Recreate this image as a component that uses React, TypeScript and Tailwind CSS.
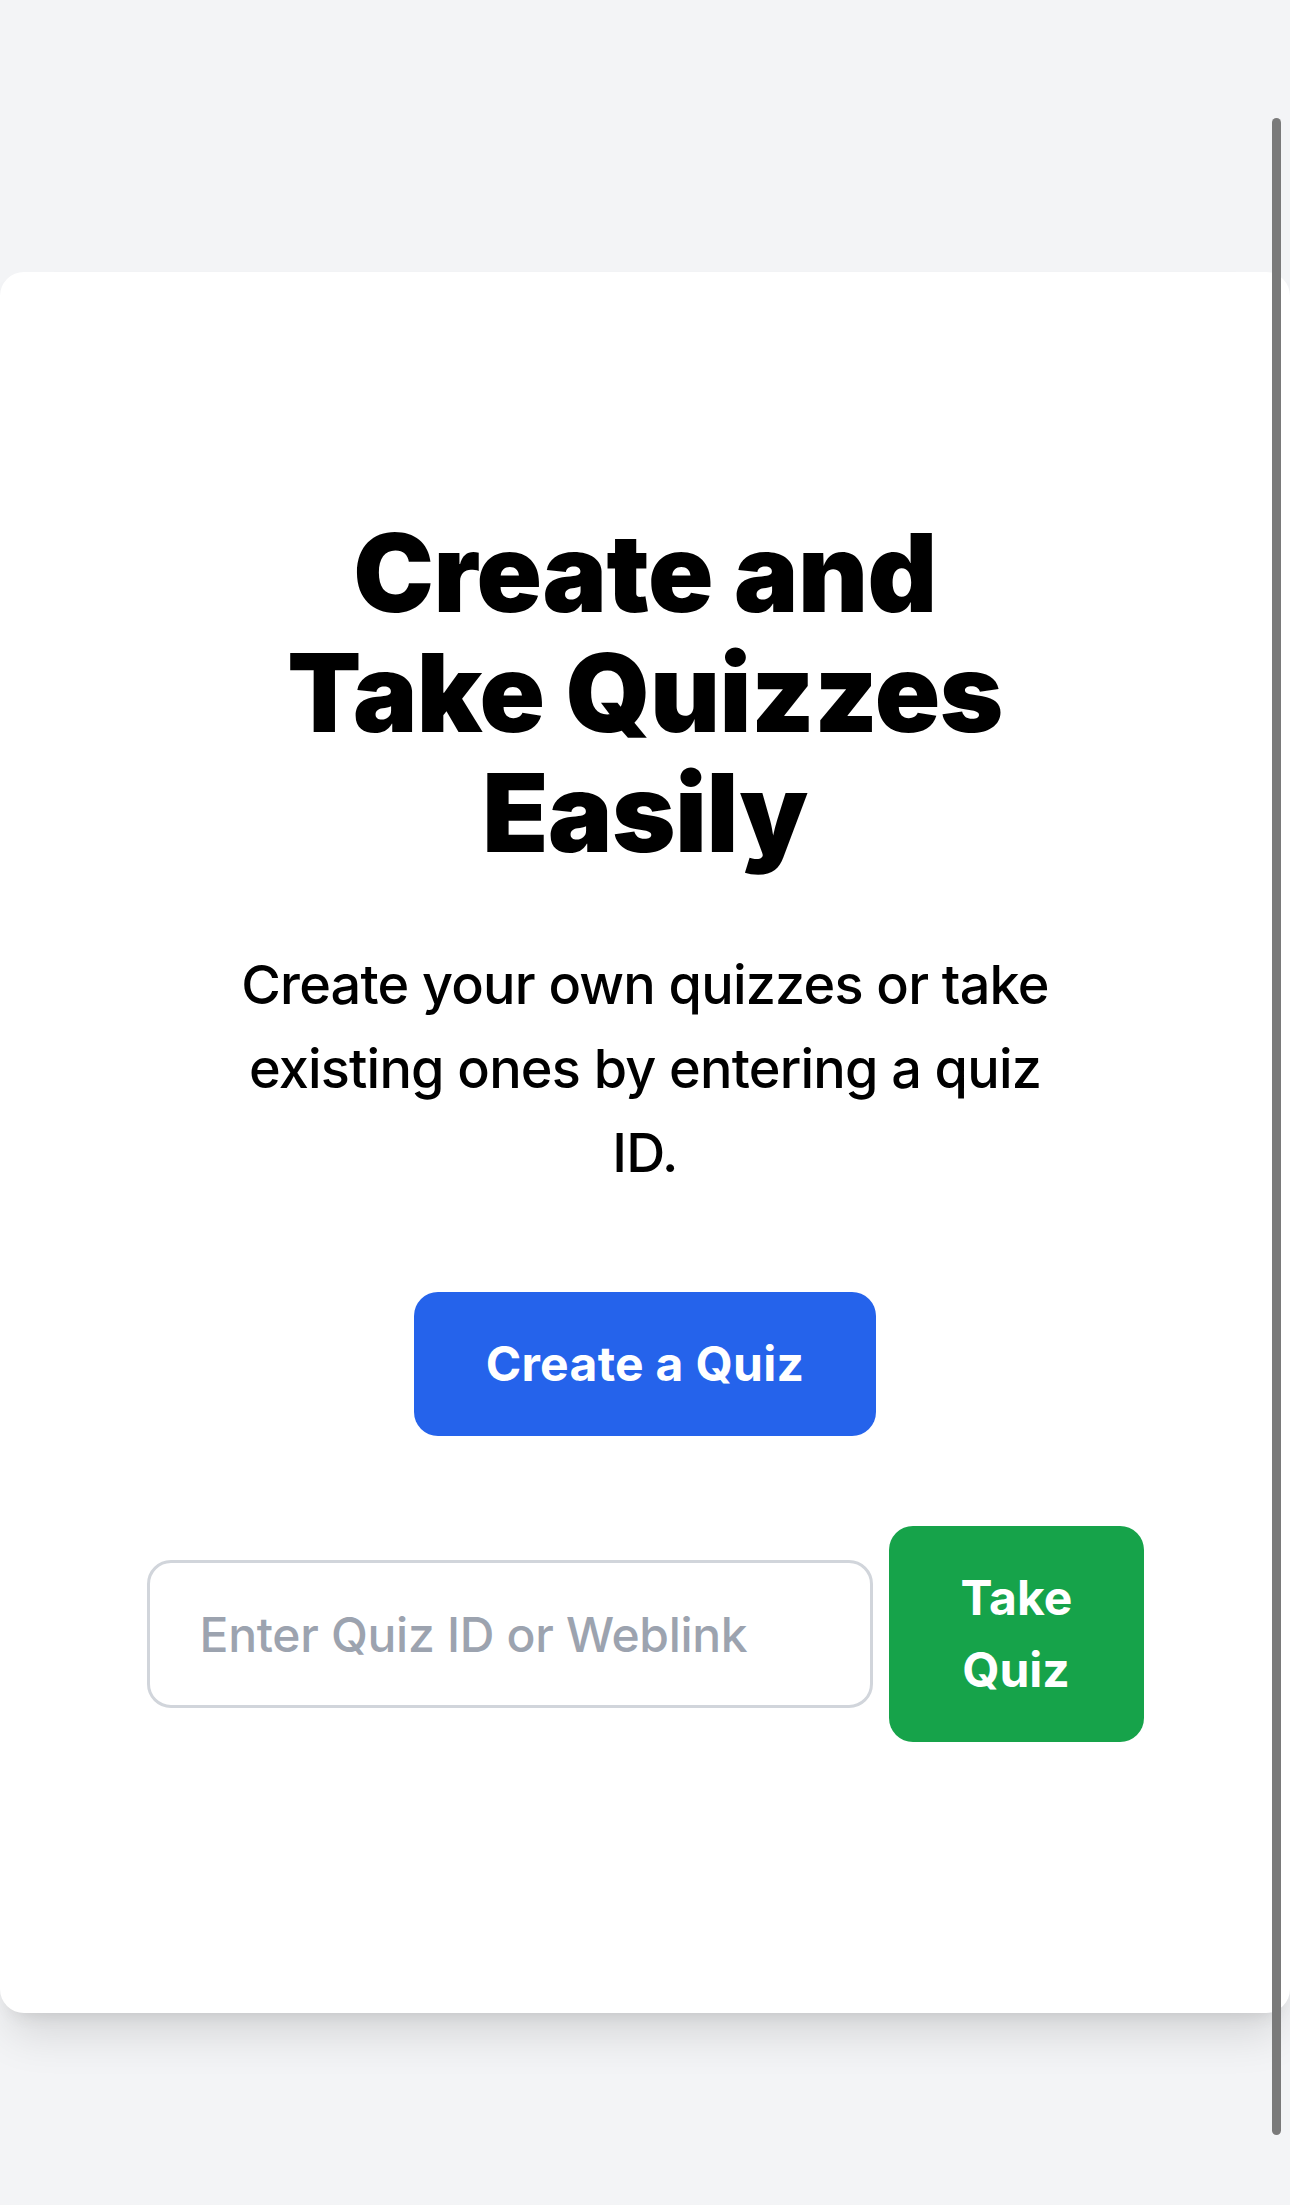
export default function App() {
  return (
    <main className="min-h-screen bg-[#f3f4f6] pt-[272px] pb-[193px] font-['Inter','Noto_Sans',sans-serif] text-black">
      <section className="flex w-full flex-col items-center rounded-[24px] bg-white pt-[241px] pb-[271px] shadow-[0_30px_45px_-9px_rgba(0,0,0,0.12),0_12px_18px_-12px_rgba(0,0,0,0.12)]">
        <h1 className="w-[760px] text-center text-[108px] leading-[120px] font-black tracking-[-0.5px]">
          Create and Take Quizzes Easily
        </h1>
        <p className="mt-[70px] w-[840px] text-center text-[54px] leading-[84px] font-medium tracking-[-0.8px]">
          Create your own quizzes or take existing ones by entering a quiz ID.
        </p>

        <button className="mt-[97px] rounded-[24px] bg-[#2563eb] px-[72px] py-[36px] text-[48px] leading-[72px] font-bold tracking-[0.3px] text-white">
          Create a Quiz
        </button>

        <div className="mt-[90px] flex items-center gap-[16px]">
          <input
            type="text"
            placeholder="Enter Quiz ID or Weblink"
            className="h-[148px] w-[726px] rounded-[24px] border-[3px] border-[#d1d5db] bg-white px-[50px] text-[48px] font-medium tracking-[-0.3px] text-black outline-none placeholder:text-[#9ca3af]"
          />
          <button className="w-[255px] rounded-[24px] bg-[#16a34a] px-[72px] py-[36px] text-[48px] leading-[72px] font-bold text-white">
            Take Quiz
          </button>
        </div>
      </section>

      {/* overlay scroll indicator */}
      <div className="fixed top-[118px] right-[9px] h-[2017px] w-[9px] rounded-full bg-[#7a7a7a]" />
    </main>
  );
}
